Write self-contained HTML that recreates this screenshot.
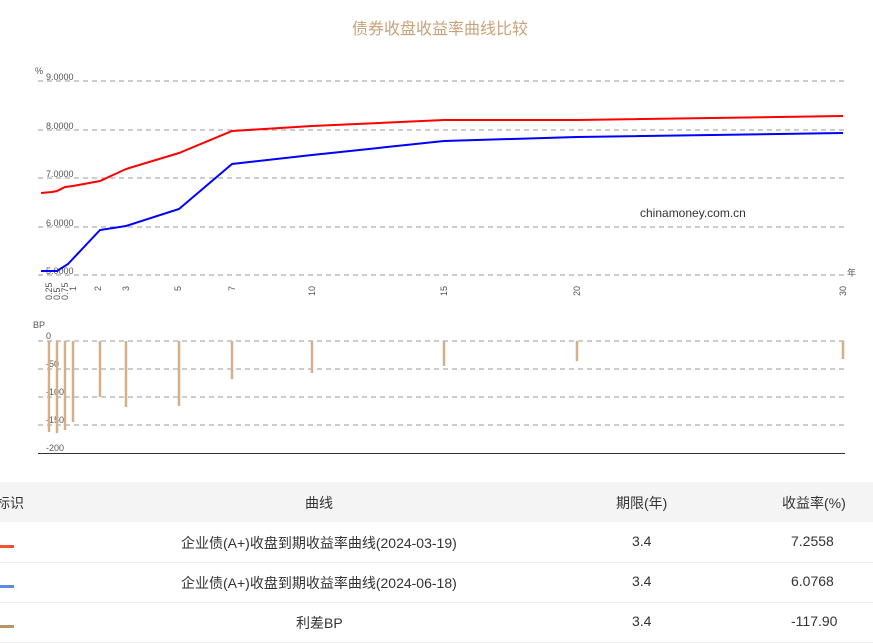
<!DOCTYPE html>
<html><head><meta charset="utf-8"><style>
body{margin:0;width:873px;height:638px;overflow:hidden;background:#fff;font-family:"Liberation Sans","Noto Sans CJK SC",sans-serif;}
.t{position:absolute;left:0;top:482px;width:873px;font-size:14px;color:#333}
.r{position:absolute;left:0;width:873px;height:40px;border-bottom:1px solid #eee}
.r span{position:absolute;top:11px}
</style></head><body>
<svg width="873" height="482" style="position:absolute;left:0;top:0" font-family="Liberation Sans, Noto Sans CJK SC, sans-serif">
<text x="440" y="34" text-anchor="middle" font-size="16" fill="#c8a27a">债券收盘收益率曲线比较</text>
<g stroke="#999" stroke-dasharray="5,4" stroke-width="1">
<line x1="38" y1="81" x2="845" y2="81"/><line x1="38" y1="130" x2="845" y2="130"/><line x1="38" y1="178" x2="845" y2="178"/><line x1="38" y1="227" x2="845" y2="227"/><line x1="38" y1="275" x2="845" y2="275"/>
<line x1="38" y1="341" x2="845" y2="341"/><line x1="38" y1="369" x2="845" y2="369"/><line x1="38" y1="397" x2="845" y2="397"/><line x1="38" y1="425" x2="845" y2="425"/>
</g>
<line x1="38" y1="453.5" x2="845" y2="453.5" stroke="#333"/>
<g font-size="9" fill="#555">
<text x="35" y="74">%</text>
<text x="46" y="80">9.0000</text><text x="46" y="129">8.0000</text><text x="46" y="177">7.0000</text><text x="46" y="226">6.0000</text><text x="46" y="274">5.0000</text>
<text x="847" y="276">年</text>
<text x="33" y="328">BP</text>
<text x="46" y="339">0</text><text x="46" y="367">-50</text><text x="46" y="395">-100</text><text x="46" y="423">-150</text><text x="46" y="451">-200</text>
<g transform="rotate(-90)">
<text x="-300" y="52">0.25</text><text x="-300" y="60">0.5</text><text x="-300" y="68">0.75</text><text x="-291" y="76">1</text>
<text x="-291" y="101">2</text><text x="-291" y="129">3</text><text x="-291" y="181">5</text><text x="-291" y="235">7</text>
<text x="-296" y="315">10</text><text x="-296" y="447">15</text><text x="-296" y="580">20</text><text x="-296" y="846">30</text>
</g></g>
<text x="640" y="217" font-size="12" fill="#333">chinamoney.com.cn</text>
<polyline fill="none" stroke="#f00" stroke-width="2" points="41,193 52,192 57,191 65,187 73,186 100,181 126,169 179,153 232,131 312,126 444,120 577,120 843,116"/>
<polyline fill="none" stroke="#00f" stroke-width="2" points="41,271 57,271 68,264 100,230 126,226 179,209 232,164 312,155 444,141 577,137 843,133"/>
<g stroke="#d4b08a" stroke-width="2.5">
<line x1="49" y1="341" x2="49" y2="432"/><line x1="57" y1="341" x2="57" y2="433"/><line x1="65" y1="341" x2="65" y2="430"/><line x1="73" y1="341" x2="73" y2="422"/>
<line x1="100" y1="341" x2="100" y2="397"/><line x1="126" y1="341" x2="126" y2="407"/><line x1="179" y1="341" x2="179" y2="406"/><line x1="232" y1="341" x2="232" y2="379"/>
<line x1="312" y1="341" x2="312" y2="373"/><line x1="444" y1="341" x2="444" y2="366"/><line x1="577" y1="341" x2="577" y2="361"/><line x1="843" y1="341" x2="843" y2="359"/>
</g>
</svg>
<div class="t">
<div class="r" style="top:0;background:#f4f4f4;border:0"><span style="left:-4px">标识</span><span style="left:305px">曲线</span><span style="left:616px">期限(年)</span><span style="left:782px">收益率(%)</span></div>
<div class="r" style="top:40px"><div style="position:absolute;left:0;top:23px;width:14px;height:3px;background:#f5532d"></div><span style="left:181px">企业债(A+)收盘到期收益率曲线(2024-03-19)</span><span style="left:632px">3.4</span><span style="left:791px">7.2558</span></div>
<div class="r" style="top:80px"><div style="position:absolute;left:0;top:23px;width:14px;height:3px;background:#5b8ae0"></div><span style="left:181px">企业债(A+)收盘到期收益率曲线(2024-06-18)</span><span style="left:632px">3.4</span><span style="left:791px">6.0768</span></div>
<div class="r" style="top:120px"><div style="position:absolute;left:0;top:23px;width:14px;height:3px;background:#b99468"></div><span style="left:296px">利差BP</span><span style="left:632px">3.4</span><span style="left:791px">-117.90</span></div>
</div>
</body></html>
